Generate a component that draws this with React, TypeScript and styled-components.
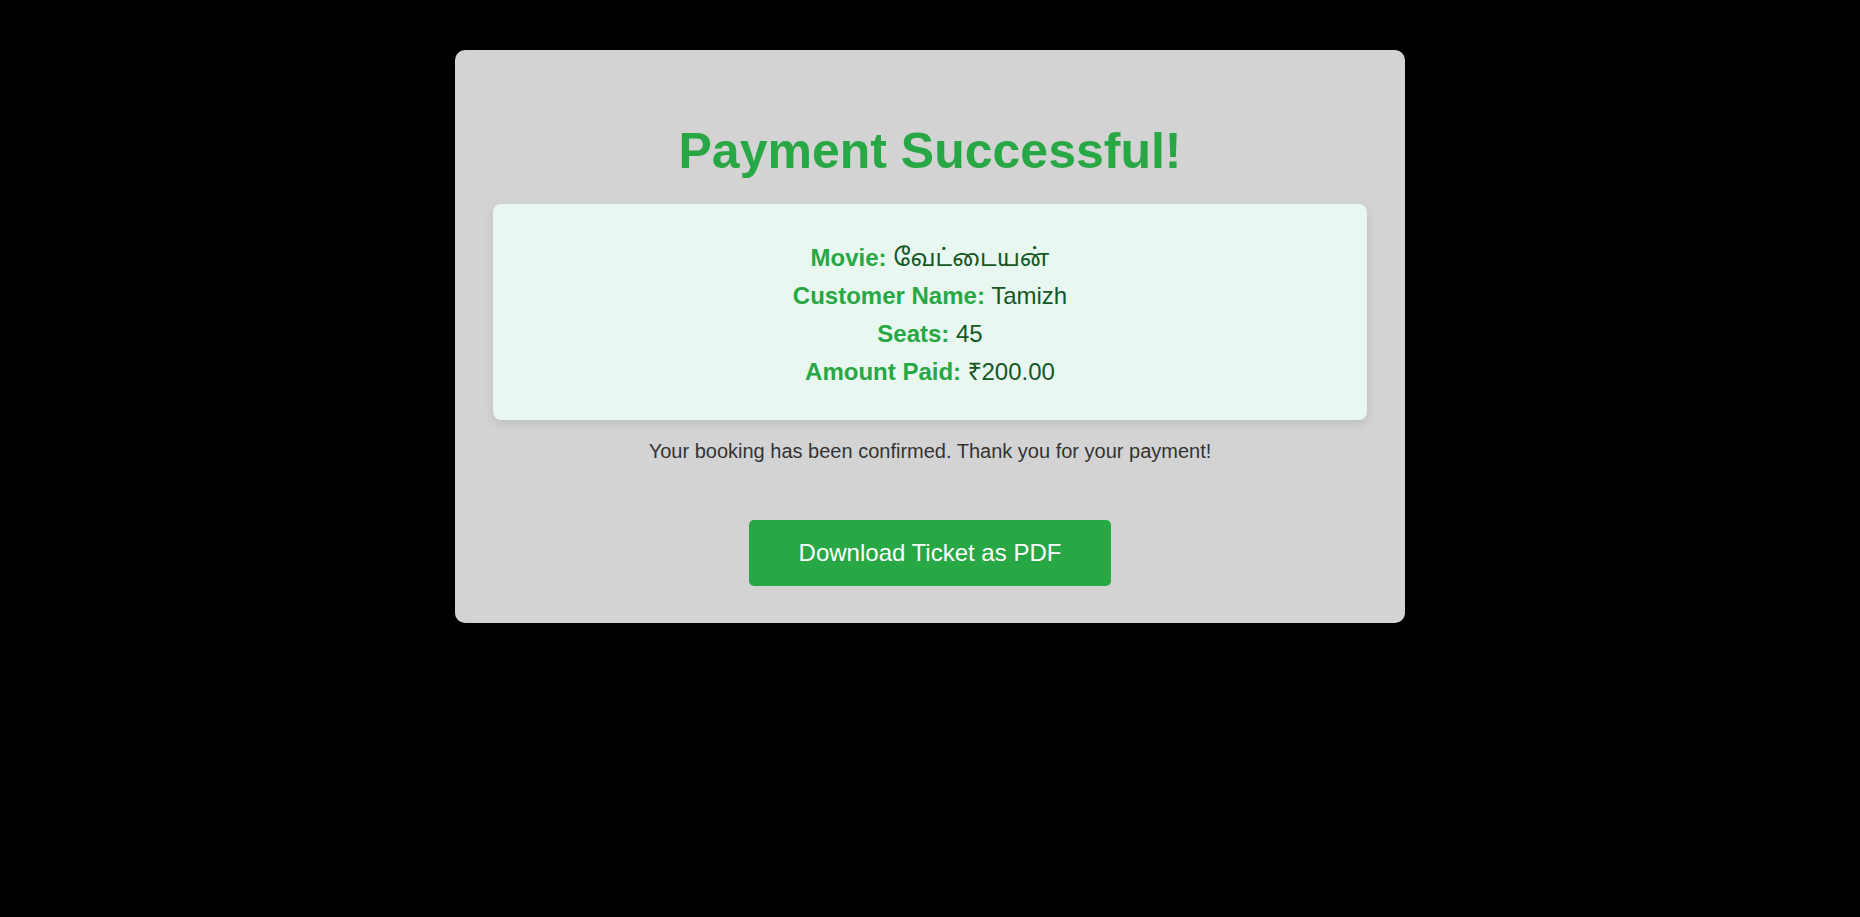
import React from "react";
import styled, { createGlobalStyle } from "styled-components";

const GlobalStyle = createGlobalStyle`
  html, body {
    margin: 0;
    padding: 0;
    background: #000000;
    font-family: "Liberation Sans", Arial, "Noto Sans Tamil", "Noto Sans", sans-serif;
  }
`;

const Page = styled.main`
  min-height: 917px;
  display: flex;
  justify-content: center;
  align-items: flex-start;
  padding-top: 50px;
  box-sizing: border-box;
`;

const Card = styled.section`
  width: 950px;
  box-sizing: border-box;
  padding: 38px 38px 37px;
  background: #d3d3d3;
  border-radius: 10px;
  display: flex;
  flex-direction: column;
  align-items: center;
`;

const Title = styled.h1`
  margin: 34px 0 24px;
  font-size: 50px;
  font-weight: 700;
  color: #28a745;
  text-align: center;
`;

const Details = styled.div`
  align-self: stretch;
  padding: 35px 20px 29px;
  background: #e8f7ef;
  border-radius: 8px;
  box-shadow: 0 4px 10px rgba(0, 0, 0, 0.1);
  display: flex;
  flex-direction: column;
  align-items: center;
`;

const Line = styled.p`
  margin: 0;
  font-size: 24px;
  line-height: 38px;
  color: #155724;
  text-align: center;
`;

const Label = styled.strong`
  color: #28a745;
  font-weight: 700;
`;

const Message = styled.p`
  margin: 20px 0 57px;
  font-size: 20px;
  color: #333333;
  text-align: center;
`;

const DownloadButton = styled.button`
  font-family: "Liberation Sans", Arial, sans-serif;
  font-size: 24px;
  line-height: 27px;
  padding: 19px 50px 20px;
  color: #ffffff;
  background: #28a745;
  border: none;
  border-radius: 5px;
  cursor: pointer;
`;

const rows: { label: string; value: string }[] = [
  { label: "Movie:", value: "வேட்டையன்" },
  { label: "Customer Name:", value: "Tamizh" },
  { label: "Seats:", value: "45" },
  { label: "Amount Paid:", value: "₹200.00" },
];

export default function App() {
  return (
    <>
      <GlobalStyle />
      <Page>
        <Card>
          <Title>Payment Successful!</Title>
          <Details>
            {rows.map((r) => (
              <Line key={r.label}>
                <Label>{r.label}</Label> {r.value}
              </Line>
            ))}
          </Details>
          <Message>Your booking has been confirmed. Thank you for your payment!</Message>
          <DownloadButton>Download Ticket as PDF</DownloadButton>
        </Card>
      </Page>
    </>
  );
}
